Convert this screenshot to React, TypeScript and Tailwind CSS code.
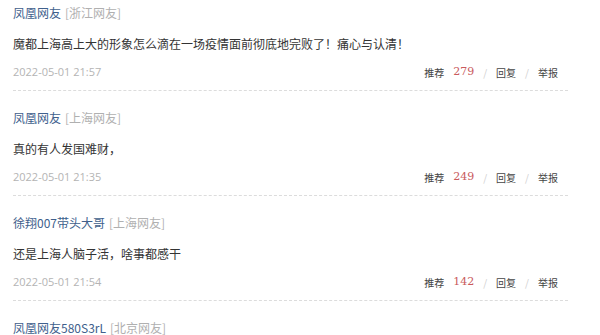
import React from "react";

type Comment = {
  user: string;
  area: string;
  text?: string;
  time?: string;
  likes?: number;
};

const comments: Comment[] = [
  {
    user: "凤凰网友",
    area: "浙江网友",
    text: "魔都上海高上大的形象怎么滴在一场疫情面前彻底地完败了！痛心与认清！",
    time: "2022-05-01 21:57",
    likes: 279,
  },
  {
    user: "凤凰网友",
    area: "上海网友",
    text: "真的有人发国难财，",
    time: "2022-05-01 21:35",
    likes: 249,
  },
  {
    user: "徐翔007带头大哥",
    area: "上海网友",
    text: "还是上海人脑子活，啥事都感干",
    time: "2022-05-01 21:54",
    likes: 142,
  },
  // only the header of this one shows at the bottom edge
  {
    user: "凤凰网友580S3rL",
    area: "北京网友",
  },
];

const cjk = "font-['Microsoft_YaHei','Noto_Sans_CJK_SC',sans-serif]";

const CommentItem = ({ c, first }: { c: Comment; first: boolean }) => {
  const full = c.text !== undefined;
  return (
    <div
      className={`mx-[13px] ${
        full ? "border-b border-dashed border-[#dcdcdc] pb-[8px]" : ""
      } ${first ? "pt-[3px]" : "pt-[17px]"}`}
    >
      <div className={`h-[20px] text-[12px] leading-[20px] ${cjk}`}>
        <span className="text-[#40608c]">{c.user}</span>
        <span className="ml-[4px] text-[#b0b0b0]">[{c.area}]</span>
      </div>
      {full && (
        <>
          <p
            className={`mt-[11px] h-[20px] text-[12px] leading-[20px] text-[#333] ${cjk}`}
          >
            {c.text}
          </p>
          <div className="mt-[8px] flex h-[20px] items-center justify-between pr-[10px]">
            <span className="font-['Open_Sans',sans-serif] text-[11px] text-[#b4b4b4]">
              {c.time}
            </span>
            <div className={`flex items-center text-[10px] text-[#444] ${cjk}`}>
              <span>推荐</span>
              <span className="ml-[9px] font-['DejaVu_Serif',serif] text-[11px] text-[#c95a5c]">
                {c.likes}
              </span>
              <span className="mx-[9px] text-[#cfcfcf]">/</span>
              <span>回复</span>
              <span className="mx-[9px] text-[#cfcfcf]">/</span>
              <span>举报</span>
            </div>
          </div>
        </>
      )}
    </div>
  );
};

const App = () => {
  return (
    <div className="h-[335px] w-[600px] overflow-hidden bg-white">
      <div className="w-[581px]">
        {comments.map((c, i) => (
          <CommentItem key={i} c={c} first={i === 0} />
        ))}
      </div>
    </div>
  );
};

export default App;
